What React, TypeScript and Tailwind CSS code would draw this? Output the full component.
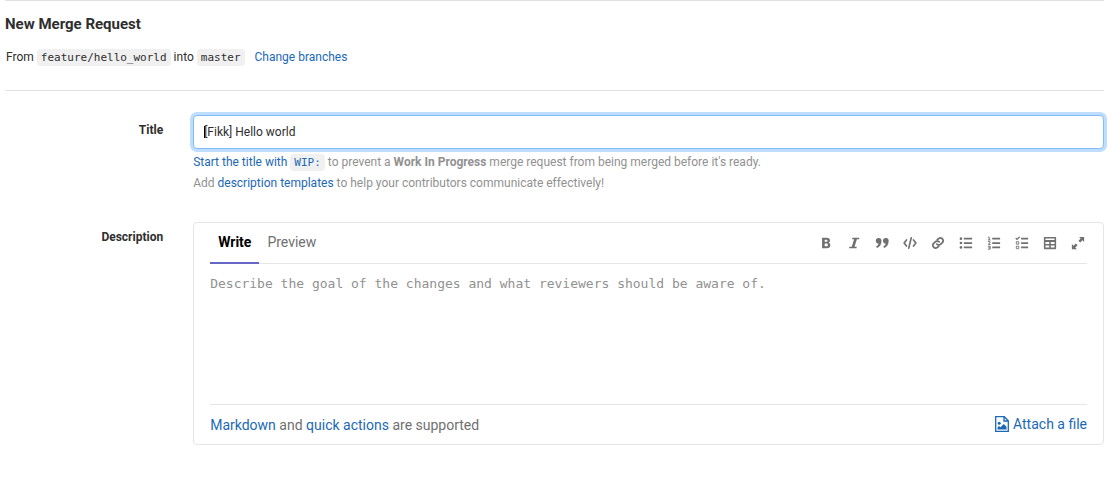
import React from "react";

type ToolProps = { label: string; children: React.ReactNode };

function Tool({ label, children }: ToolProps) {
  return (
    <button type="button" aria-label={label} className="flex h-5 w-7 items-center justify-center">
      <svg viewBox="0 0 16 16" className="h-[14px] w-[14px]" fill="currentColor" aria-hidden="true">
        {children}
      </svg>
    </button>
  );
}

function Code({ children }: { children: React.ReactNode }) {
  return (
    <code className="rounded-[4px] bg-[#f0f0f0] px-1 py-0.5 font-['DejaVu_Sans_Mono',monospace] text-[11px]">
      {children}
    </code>
  );
}

function Toolbar() {
  return (
    <div className="-mr-[5px] flex text-[#707070]">
      <Tool label="Bold">
        <path
          fillRule="evenodd"
          d="M3.500 2h5.300c2.500 0 3.700 1.200 3.700 3 0 1.300-.6 2.200-1.600 2.700 1.400.4 2.100 1.500 2.100 2.900C13 12.700 11.500 14 8.800 14H3.500V2zm3 2.200v2.500h1.800c.9 0 1.400-.4 1.400-1.200 0-.9-.5-1.300-1.400-1.300H6.500zm0 4.500v3h2c1.100 0 1.600-.5 1.600-1.500s-.5-1.500-1.600-1.500h-2z"
        />
      </Tool>
      <Tool label="Italic">
        <path d="M6 2h8v1.700h-2.700L8.600 12.300H11V14H2.500v-1.700h2.900L8.100 3.700H6z" />
      </Tool>
      <Tool label="Quote">
        <path d="M4.200 2.300a3.200 3.200 0 0 1 3.200 3.400c0 4-2.100 6.900-5.200 7.900l-.9-1.600c1.600-.8 2.500-1.900 2.800-3.300a3.200 3.200 0 1 1 .1-6.400zm8.200 0a3.200 3.200 0 0 1 3.200 3.400c0 4-2.100 6.900-5.200 7.900l-.9-1.600c1.600-.8 2.500-1.900 2.800-3.300a3.200 3.200 0 1 1 .1-6.400z" />
      </Tool>
      <Tool label="Code">
        <path
          d="M4 4.500 1.300 8 4 11.500M12 4.500 14.700 8 12 11.500M9.400 2.200l-2.800 11.600"
          fill="none"
          stroke="currentColor"
          strokeWidth="1.900"
          strokeLinecap="round"
          strokeLinejoin="round"
        />
      </Tool>
      <Tool label="Link">
        <g fill="none" stroke="currentColor" strokeWidth="2" strokeLinecap="round">
          <path d="m7.200 4.300 1.700-1.500a3.150 3.150 0 0 1 4.300 4.500l-2 2a3.150 3.150 0 0 1-4.500 0" />
          <path d="m8.800 11.700-1.700 1.500a3.150 3.150 0 0 1-4.300-4.500l2-2a3.150 3.150 0 0 1 4.500 0" />
        </g>
      </Tool>
      <Tool label="Bulleted list">
        <path d="M5.500 2h9.500v2H5.500zM5.500 7h9.500v2H5.500zM5.500 12h9.500v2H5.500z" />
        <circle cx="2.200" cy="3" r="1.500" />
        <circle cx="2.200" cy="8" r="1.500" />
        <circle cx="2.200" cy="13" r="1.500" />
      </Tool>
      <Tool label="Numbered list">
        <path d="M6 2h9v2H6zM6 7h9v2H6zM6 12h9v2H6z" />
        <path
          d="M1.200 1.300h1.300V4.500M1 4.500h3M1 6.500h2.500v1.200L1.500 9.600H4M1 11.700h2.600v3.300H1M1.600 13.400h2"
          fill="none"
          stroke="currentColor"
          strokeWidth="1.100"
        />
      </Tool>
      <Tool label="Task list">
        <path d="M7 2h8v2H7zM7 7h8v2H7zM7 12h8v2H7z" />
        <path d="m.8 2.300 1.500 1.500L5.300.8" fill="none" stroke="currentColor" strokeWidth="1.400" />
        <path d="M1.500 6.500h2.800v2.800H1.500zM1.500 11.700h2.800v2.800H1.500z" fill="none" stroke="currentColor" />
      </Tool>
      <Tool label="Table">
        <path
          fillRule="evenodd"
          d="M2 1h12a1 1 0 0 1 1 1v12a1 1 0 0 1-1 1H2a1 1 0 0 1-1-1V2a1 1 0 0 1 1-1zm.800 5.800V9h4.300V6.800zm6.100 0V9h4.300V6.800zM2.800 10.800v2.400h4.300v-2.400zm6.100 0v2.400h4.300v-2.400zM2.800 2.900v1.800h10.400V2.900z"
        />
      </Tool>
      <Tool label="Full screen">
        <path d="M9.200 1H15v5.800l-1.900-1.900-2.600 2.600-2-2 2.600-2.600zM1 9.200l1.900 1.900 2.600-2.600 2 2-2.600 2.600L6.800 15H1z" />
      </Tool>
    </div>
  );
}

export default function App() {
  return (
    <main className="pr-[9px] pl-[5px] font-[Roboto,sans-serif] text-xs text-[#2e2e2e]">
      <header className="border-y border-[#e1e1e1] pb-[22px]">
        <h1 className="pt-3 text-[15px] leading-[22px] font-bold">New Merge Request</h1>
        <div className="mt-3 flex items-baseline pl-px leading-5">
          <p>
            From <Code>feature/hello_world</Code> into <Code>master</Code>
          </p>
          <a href="#branches" className="ml-[10px] text-[#1b69b6]">
            Change branches
          </a>
        </div>
      </header>

      <form className="mt-6">
        <div className="grid grid-cols-12 gap-x-[30px]">
          <label htmlFor="title" className="col-span-2 pt-[5px] text-right leading-5 font-bold">
            Title
          </label>
          <div className="col-span-10">
            <div className="relative">
              <input
                id="title"
                type="text"
                defaultValue="[Fikk] Hello world"
                className="block h-[34px] w-full rounded-[4px] border border-[#80bdff] bg-white px-[10px] shadow-[0_0_0_3px_#bfdeff] outline-none"
              />
              <span className="absolute top-[11px] left-[11px] h-3 w-px bg-black" aria-hidden="true" />
            </div>
            <div className="mt-[3px] leading-[21px] text-[#919191]">
              <p>
                <a href="#wip" className="text-[#1b69b6]">
                  Start the title with <Code>WIP:</Code>
                </a>{" "}
                to prevent a <strong>Work In Progress</strong> merge request from being merged before it's ready.
              </p>
              <p>
                Add{" "}
                <a href="#templates" className="text-[#1b69b6]">
                  description templates
                </a>{" "}
                to help your contributors communicate effectively!
              </p>
            </div>
          </div>
        </div>

        <div className="mt-7 grid grid-cols-12 gap-x-[30px]">
          <label htmlFor="description" className="col-span-2 pt-[5px] text-right leading-5 font-bold">
            Description
          </label>
          <div className="col-span-10 rounded-[4px] border border-[#e5e5e5] px-4">
            <div className="flex items-center justify-between border-b border-[#e5e5e5]">
              <div className="-mb-px flex text-sm leading-5">
                <button type="button" className="border-b-2 border-[#6666c4] px-2 pt-[9px] pb-[10px] font-bold text-black">
                  Write
                </button>
                <button type="button" className="border-b-2 border-transparent px-2 pt-[9px] pb-[10px] text-[#707070]">
                  Preview
                </button>
              </div>
              <Toolbar />
            </div>
            <textarea
              id="description"
              placeholder="Describe the goal of the changes and what reviewers should be aware of."
              className="block h-[140px] w-full resize-none pt-[10px] font-['DejaVu_Sans_Mono',monospace] text-[13px] leading-5 outline-none placeholder:text-[#919191]"
            />
            <div className="flex items-start justify-between border-t border-[#e5e5e5] pt-[10px] pb-[9px] text-sm leading-5 text-[#707070]">
              <p>
                <a href="#markdown" className="text-[#1b69b6]">
                  Markdown
                </a>{" "}
                and{" "}
                <a href="#actions" className="text-[#1b69b6]">
                  quick actions
                </a>{" "}
                are supported
              </p>
              <button type="button" className="flex items-center gap-1 leading-[18px] text-[#1b69b6]">
                <svg viewBox="0 0 14 16" className="h-4 w-[14px]" aria-hidden="true">
                  <path
                    d="M.7.700h8.600l4 4v10.600H.7zM9 .7V5h4.300"
                    fill="none"
                    stroke="currentColor"
                    strokeWidth="1.300"
                  />
                  <circle cx="4.200" cy="7.300" r="1.500" fill="currentColor" />
                  <path d="M2.500 13.500v-2L4 10l1.500 1.300L8.700 8l2.800 2.800v2.700z" fill="currentColor" />
                </svg>
                Attach a file
              </button>
            </div>
          </div>
        </div>
      </form>
    </main>
  );
}
